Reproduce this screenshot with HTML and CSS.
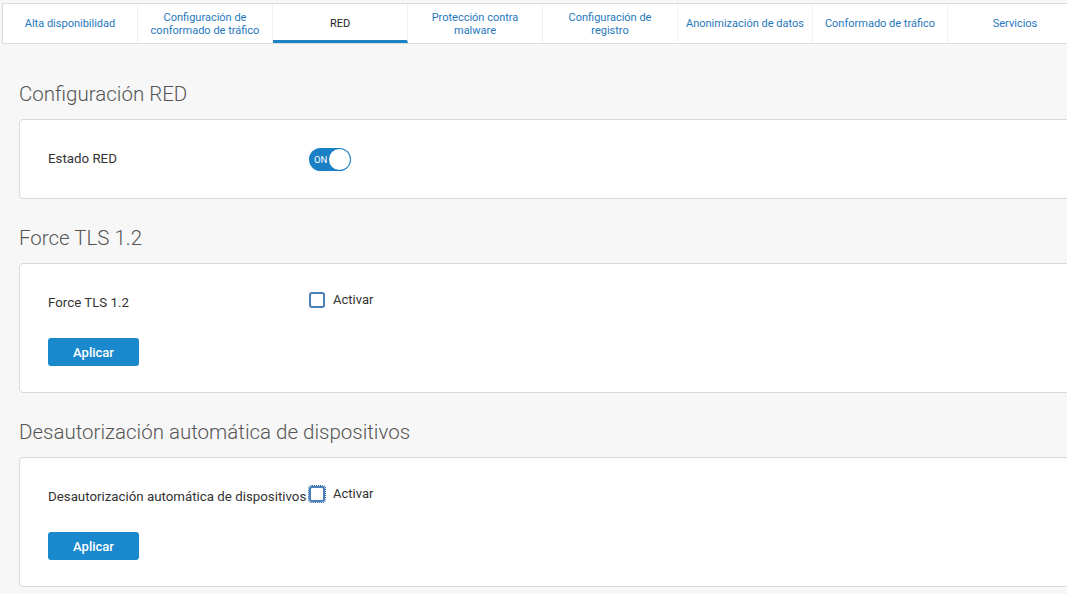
FILE: index.html
```html
<!DOCTYPE html>
<html>
  <head>
    <title>RED</title>
    <link rel="stylesheet" href="styles.css">
  </head>
  <body>
    <div class="page">
      <div class="tabs">
        <a class="tab">Alta disponibilidad</a>
        <a class="tab">Configuración de conformado de tráfico</a>
        <a class="tab active">RED</a>
        <a class="tab">Protección contra malware</a>
        <a class="tab">Configuración de registro</a>
        <a class="tab">Anonimización de datos</a>
        <a class="tab">Conformado de tráfico</a>
        <a class="tab">Servicios</a>
      </div>

      <div class="content">
        <h2 class="section-title first">Configuración RED</h2>
        <div class="card">
          <div class="row row-toggle">
            <div class="label">Estado RED</div>
            <div class="toggle">
              <span class="toggle-text">ON</span>
              <span class="knob"></span>
            </div>
          </div>
        </div>

        <h2 class="section-title">Force TLS 1.2</h2>
        <div class="card">
          <div class="row">
            <div class="label">Force TLS 1.2</div>
            <label class="check">
              <span class="box"></span>
              <span class="check-text">Activar</span>
            </label>
          </div>
          <button class="button">Aplicar</button>
        </div>

        <h2 class="section-title">Desautorización automática de dispositivos</h2>
        <div class="card">
          <div class="row">
            <div class="label">Desautorización automática de dispositivos</div>
            <label class="check">
              <span class="box focused"></span>
              <span class="check-text">Activar</span>
            </label>
          </div>
          <button class="button">Aplicar</button>
        </div>
      </div>
    </div>
  </body>
</html>
```

FILE: styles.css
```css
body {
  margin: 0;
  background-color: #f7f7f7;
  font-family: Roboto, "Liberation Sans", sans-serif;
  overflow: hidden;
}
.page {
  width: 1120px;
  padding: 3px 0 0 2px;
}
.tabs {
  display: flex;
  height: 39px;
  background-color: #fff;
  border: 1px solid #dcdcdc;
}
.tab {
  box-sizing: border-box;
  width: 135px;
  display: flex;
  align-items: center;
  justify-content: center;
  text-align: center;
  padding: 0 7px;
  font-size: 11px;
  line-height: 13px;
  color: #1f78bd;
  border-right: 1px solid #f2f2f2;
}
.tab.active {
  color: #222;
  border-bottom: 3px solid #1d82c4;
  padding-top: 3px;
}
.content {
  padding: 0 0 0 17px;
}
.section-title {
  margin: 27px 0 13px;
  line-height: 24px;
  font-size: 20.5px;
  font-weight: 300;
  color: #555;
}
.section-title.first {
  margin-top: 38px;
}
.card {
  background-color: #fff;
  border: 1px solid #dadada;
  border-radius: 4px;
  padding: 28px 28px 26px;
}
.row {
  display: flex;
  align-items: flex-start;
  height: 20px;
}
.row-toggle {
  height: 23px;
  margin-bottom: 1px;
}
.label {
  width: 261px;
  font-size: 13.3px;
  line-height: 15px;
  color: #333;
  padding-top: 3px;
  white-space: nowrap;
}
.toggle {
  position: relative;
  width: 42px;
  height: 23px;
  border-radius: 12px;
  background-color: #1a7fc4;
}
.toggle-text {
  position: absolute;
  left: 5px;
  top: 6px;
  font-size: 9.5px;
  color: #fff;
}
.knob {
  position: absolute;
  right: 1px;
  top: 1px;
  width: 21px;
  height: 21px;
  border-radius: 50%;
  background-color: #fff;
}
.check {
  display: flex;
  align-items: flex-start;
}
.box {
  box-sizing: border-box;
  width: 16px;
  height: 16px;
  border: 2px solid #4a7fb8;
  border-radius: 3px;
  background-color: #fff;
}
.box.focused {
  outline: 1px dotted #1a5a9a;
  outline-offset: 0;
}
.check-text {
  margin-left: 8px;
  font-size: 13px;
  line-height: 15px;
  color: #333;
}
.button {
  display: block;
  margin-top: 26px;
  width: 91px;
  height: 28px;
  border: none;
  border-radius: 3px;
  background-color: #1a88cd;
  color: #fff;
  font-family: Roboto, "Liberation Sans", sans-serif;
  font-size: 13px;
  font-weight: 500;
}
```
